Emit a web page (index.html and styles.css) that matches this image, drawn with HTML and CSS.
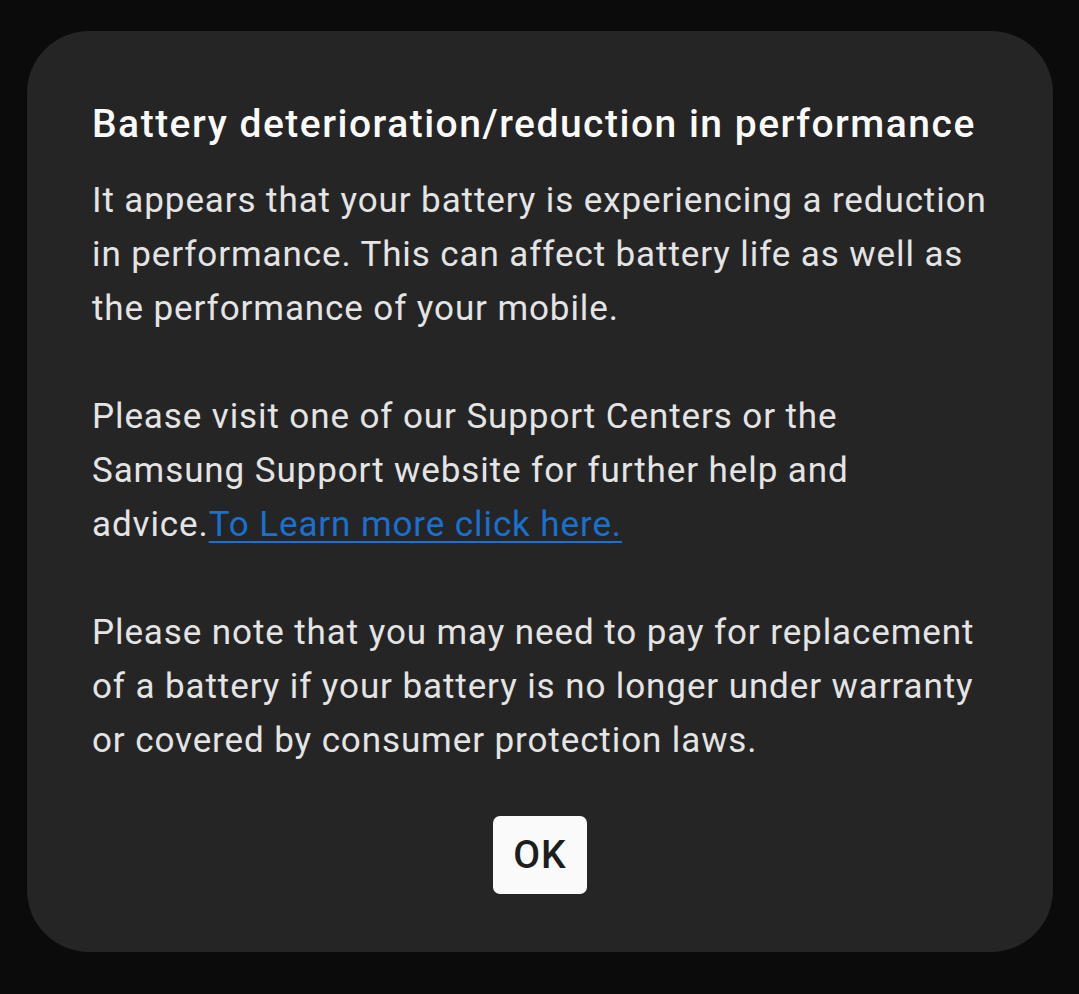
FILE: index.html
```html
<!DOCTYPE html>
<html lang="en">
<head>
<meta charset="utf-8">
<title>Battery deterioration</title>
<link rel="stylesheet" href="styles.css">
</head>
<body>
<div class="dialog">
  <h1 class="title">Battery deterioration/reduction in performance</h1>
  <div class="message">
    <p>It appears that your battery is experiencing a reduction in performance. This can affect battery life as well as the performance of your mobile.</p>
    <p>Please visit one of our Support Centers or the Samsung Support website for further help and advice.<a class="link" href="#">To Learn more click here.</a></p>
    <p>Please note that you may need to pay for replacement of a battery if your battery is no longer under warranty or covered by consumer protection laws.</p>
  </div>
  <div class="actions">
    <button class="ok">OK</button>
  </div>
</div>
</body>
</html>
```
FILE: styles.css
```css
html, body {
  margin: 0;
  padding: 0;
  background: #0b0b0b;
}
body {
  font-family: Roboto, "Liberation Sans", sans-serif;
  padding: 31px 26px 42px 27px;
}
.dialog {
  background: #252525;
  border-radius: 62px;
  width: 1026px;
  height: 921px;
  box-sizing: border-box;
  padding: 70px 65px 0 65px;
  display: flex;
  flex-direction: column;
}
.title {
  margin: 0;
  font-size: 39px;
  letter-spacing: 1.5px;
  font-weight: 500;
  color: #fafafa;
  line-height: 46px;
}
.message {
  margin-top: 27px;
  margin-right: -3px;
  color: #e4e4e4;
  font-size: 35px;
  letter-spacing: 0.9px;
  line-height: 54px;
}
.message p {
  margin: 0 0 54px 0;
}
.message p:last-child {
  margin-bottom: 0;
}
.link {
  color: #1a70cf;
  text-decoration: underline;
  text-underline-offset: 5px;
  text-decoration-thickness: 2px;
}
.actions {
  display: flex;
  justify-content: center;
  margin-top: 48px;
}
.ok {
  background: #fafafa;
  color: #1e1e1e;
  border: none;
  border-radius: 7px;
  width: 94px;
  height: 78px;
  font-family: Roboto, "Liberation Sans", sans-serif;
  font-size: 39px;
  letter-spacing: 1px;
  font-weight: 500;
  padding: 0;
}
```
